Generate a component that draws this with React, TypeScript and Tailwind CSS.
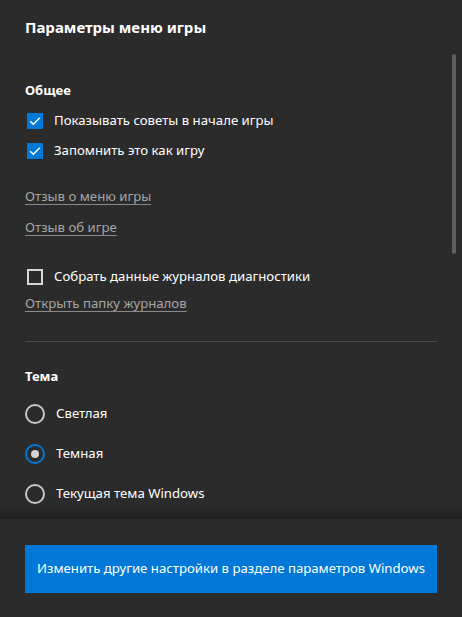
import { useState } from "react";

const font = { fontFamily: '"Segoe UI", "Noto Sans", sans-serif' };

function Check({ checked, label, onToggle }: { checked: boolean; label: string; onToggle: () => void }) {
  return (
    <button type="button" onClick={onToggle} className="flex h-[30px] items-center gap-[11px] text-left">
      {checked ? (
        <span className="ml-[2px] flex h-[16px] w-[16px] items-center justify-center bg-[#0078d7]">
          <svg viewBox="0 0 16 16" className="h-[14px] w-[14px]" fill="none" stroke="#fff" strokeWidth={1.6}>
            <path d="M2.5 8.2l3.6 3.6 7.4-7.6" />
          </svg>
        </span>
      ) : (
        <span className="ml-[2px] h-[16px] w-[16px] border-2 border-[#d6d6d6]" />
      )}
      <span className="text-[13.2px] text-white">{label}</span>
    </button>
  );
}

function Radio({ checked, label, onPick }: { checked: boolean; label: string; onPick: () => void }) {
  return (
    <button type="button" onClick={onPick} className="flex h-[40px] items-center gap-[11px] text-left">
      <span
        className={
          checked
            ? "flex h-[20px] w-[20px] items-center justify-center rounded-full border-2 border-[#0078d7]"
            : "h-[20px] w-[20px] rounded-full border-2 border-[#c8c8c8]"
        }
      >
        {checked && <span className="h-[8px] w-[8px] rounded-full bg-[#d2d2d2]" />}
      </span>
      <span className="text-[13.2px] text-white">{label}</span>
    </button>
  );
}

function Link({ children }: { children: string }) {
  return (
    <a href="#" className="text-[13.2px] text-[#a6a6a6] underline underline-offset-[3px] decoration-[#8a8a8a]">
      {children}
    </a>
  );
}

export default function App() {
  const [tips, setTips] = useState(true);
  const [remember, setRemember] = useState(true);
  const [logs, setLogs] = useState(false);
  const [theme, setTheme] = useState("dark");

  return (
    <div style={font} className="flex h-[617px] w-[462px] flex-col overflow-hidden bg-[#2b2b2b]">
      <div className="relative flex-1 overflow-hidden">
        {/* scrollbar thumb */}
        <div className="absolute right-[6px] top-[54px] h-[200px] w-[4px] rounded-full bg-[#5f5f5f]" />

        <div className="px-[25px]">
          <h1 className="pt-[17px] text-[15px] font-bold leading-[20px] text-white">Параметры меню игры</h1>

          <h2 className="mt-[44px] text-[13px] font-bold leading-[18px] text-white">Общее</h2>
          <div className="mt-[7px] flex flex-col">
            <Check checked={tips} label="Показывать советы в начале игры" onToggle={() => setTips(!tips)} />
            <Check checked={remember} label="Запомнить это как игру" onToggle={() => setRemember(!remember)} />
          </div>

          <div className="mt-[21px] flex flex-col items-start gap-[13px] leading-[18px]">
            <Link>Отзыв о меню игры</Link>
            <Link>Отзыв об игре</Link>
          </div>

          <div className="mt-[26px] flex flex-col items-start">
            <Check checked={logs} label="Собрать данные журналов диагностики" onToggle={() => setLogs(!logs)} />
            <div className="mt-px leading-[18px]">
              <Link>Открыть папку журналов</Link>
            </div>
          </div>

          <div className="mt-[29px] h-px bg-[#4a4a4a]" />

          <h2 className="mt-[25px] text-[13px] font-bold leading-[18px] text-white">Тема</h2>
          <div className="mt-[9px] flex flex-col">
            <Radio checked={theme === "light"} label="Светлая" onPick={() => setTheme("light")} />
            <Radio checked={theme === "dark"} label="Темная" onPick={() => setTheme("dark")} />
            <Radio checked={theme === "system"} label="Текущая тема Windows" onPick={() => setTheme("system")} />
          </div>
        </div>
        <div className="absolute bottom-0 left-0 h-[14px] w-full bg-gradient-to-b from-transparent to-[#1f1f1f]" />
      </div>

      <div className="h-[98px] shrink-0 px-[25px] pt-[26px]">
        <button
          type="button"
          className="flex h-[48px] w-full items-center justify-center bg-[#0078d7] text-[13.2px] text-white"
        >
          Изменить другие настройки в разделе параметров Windows
        </button>
      </div>
    </div>
  );
}
